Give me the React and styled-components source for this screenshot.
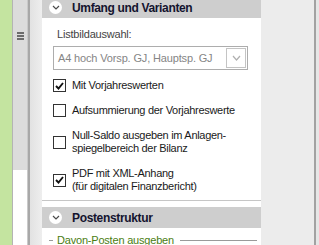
import React from 'react';
import styled, { createGlobalStyle } from 'styled-components';

const GlobalStyle = createGlobalStyle`
    html, body {
        margin: 0;
        padding: 0;
        background: #ececec;
    }
    body {
        font-family: "Liberation Sans", Arial, sans-serif;
    }
`;

const Screen = styled.div`
    display: flex;
    width: 319px;
    height: 245px;
    overflow: hidden;
    background: #ececec;
`;

const GreenStrip = styled.div`
    width: 12px;
    background: #c4e4a0;
    border-right: 1px solid #b4b4b4;
`;

const SideRail = styled.div`
    width: 14px;
    display: flex;
    flex-direction: column;
    background: #ffffff;
`;

const RailThumb = styled.div`
    height: 170px;
    background: #dcdcdc;
    padding-top: 32px;
    box-sizing: border-box;
    display: flex;
    flex-direction: column;
    align-items: center;
    gap: 1px;
`;

const Bar = styled.span`
    display: block;
    width: 7px;
    height: 2px;
    background: #6c6c6c;
`;

const Splitter = styled.div`
    width: 2px;
    background: #a8a8a8;
    border-left: 1px solid #cacaca;
`;

const Gutter = styled.div`
    width: 12px;
    background: linear-gradient(to right, #e2e2e2, #eeeeee);
`;

const Panel = styled.div`
    width: 219px;
    display: flex;
    flex-direction: column;
    background: #ffffff;
`;

const SectionHeader = styled.div`
    flex: none;
    height: 21px;
    margin-top: ${props => props.clipped ? '-3px' : '0'};
    display: flex;
    align-items: center;
    background: #cecece;
    padding-left: 7px;
    gap: 10px;
    color: #14142e;
    font-weight: 700;
    font-size: 12px;
    letter-spacing: -0.35px;
`;

const Toggle = styled.span`
    width: 13px;
    height: 13px;
    border-radius: 50%;
    background: #ffffff;
    display: flex;
    align-items: center;
    justify-content: center;
`;

const SectionBody = styled.div`
    padding: 9px 13px 7px 11px;
    display: flex;
    flex-direction: column;
    border-bottom: ${props => props.divided ? '1px solid #c6c6c6' : 'none'};
`;

const Spacer = styled.div`
    height: 6px;
    flex: none;
`;

const Label = styled.div`
    font-size: 11px;
    line-height: 15px;
    letter-spacing: -0.2px;
    color: #444444;
    padding-left: 4px;
    margin-bottom: 4px;
`;

const Select = styled.div`
    height: 24px;
    box-sizing: border-box;
    border: 1px solid #adadad;
    display: flex;
    align-items: center;
    justify-content: space-between;
    padding: 0 1px 0 4px;
    margin-bottom: 9px;
    font-size: 11px;
    letter-spacing: -0.15px;
    color: #858585;
    background: #ffffff;
`;

const SelectButton = styled.span`
    width: 20px;
    height: 20px;
    box-sizing: border-box;
    border: 1px solid #c4c4c4;
    display: flex;
    align-items: center;
    justify-content: center;
`;

const Options = styled.div`
    display: flex;
    flex-direction: column;
    gap: 12px;
`;

const Row = styled.label`
    display: flex;
    align-items: center;
    gap: 6px;
    font-size: 11px;
    line-height: 13px;
    letter-spacing: -0.3px;
    color: #1a1a1a;
`;

const Box = styled.span`
    flex: none;
    width: 13px;
    height: 13px;
    box-sizing: border-box;
    border: 1px solid #333333;
    background: #ffffff;
    display: flex;
    align-items: center;
    justify-content: center;
`;

const Legend = styled.div`
    display: flex;
    align-items: center;
    gap: 4px;
    padding: 6px 4px 0 7px;
    font-size: 11px;
    line-height: 13px;
    letter-spacing: -0.2px;
    color: #4a7d12;
`;

const Rule = styled.span`
    height: 1px;
    background: #9a9a9a;
    width: ${props => props.width ? props.width + 'px' : 'auto'};
    flex: ${props => props.width ? 'none' : '1'};
    margin-left: ${props => props.width ? '0' : '2px'};
`;

const RightArea = styled.div`
    width: 53px;
    background: #ececec;
`;

const RightEdge = styled.div`
    width: 2px;
    background: #a2a2a2;
`;

const RightRest = styled.div`
    flex: 1;
    background: #e6e6e6;
`;

function Chevron({ color = '#555', w = 7, h = 4 }) {
    return <svg width={w + 2} height={h + 2} viewBox={`-1 -1 ${w + 2} ${h + 2}`}>
        <polyline points={`0,0 ${w / 2},${h} ${w},0`} fill="none" stroke={color} strokeWidth="1.2" />
    </svg>;
}

function Checkbox({ checked, children }) {
    return <Row>
        <Box>
            {checked && <svg width="9" height="8" viewBox="0 0 9 8">
                <polyline points="1,4 3.5,6.5 8,1" fill="none" stroke="#111" strokeWidth="1.9" />
            </svg>}
        </Box>
        <span>{children}</span>
    </Row>;
}

export default function App() {
    return <>
        <GlobalStyle />
        <Screen>
            <GreenStrip />
            <SideRail>
                <RailThumb>
                    <Bar /><Bar /><Bar />
                </RailThumb>
            </SideRail>
            <Splitter />
            <Gutter />
            <Panel>
                <SectionHeader clipped>
                    <Toggle><Chevron w={6} h={3} color="#4a4a4a" /></Toggle>
                    Umfang und Varianten
                </SectionHeader>
                <SectionBody divided>
                    <Label>Listbildauswahl:</Label>
                    <Select>
                        A4 hoch Vorsp. GJ, Hauptsp. GJ
                        <SelectButton><Chevron w={7} h={4} color="#b0b0b0" /></SelectButton>
                    </Select>
                    <Options>
                        <Checkbox checked>Mit Vorjahreswerten</Checkbox>
                        <Checkbox>Aufsummierung der Vorjahreswerte</Checkbox>
                        <Checkbox>Null-Saldo ausgeben im Anlagen-<br />spiegelbereich der Bilanz</Checkbox>
                        <Checkbox checked>PDF mit XML-Anhang<br />(für digitalen Finanzbericht)</Checkbox>
                    </Options>
                </SectionBody>
                <Spacer />
                <SectionHeader>
                    <Toggle><Chevron w={6} h={3} color="#4a4a4a" /></Toggle>
                    Postenstruktur
                </SectionHeader>
                <Legend>
                    <Rule width={4} />
                    Davon-Posten ausgeben
                    <Rule />
                </Legend>
            </Panel>
            <RightArea />
            <RightEdge />
            <RightRest />
        </Screen>
    </>;
}
